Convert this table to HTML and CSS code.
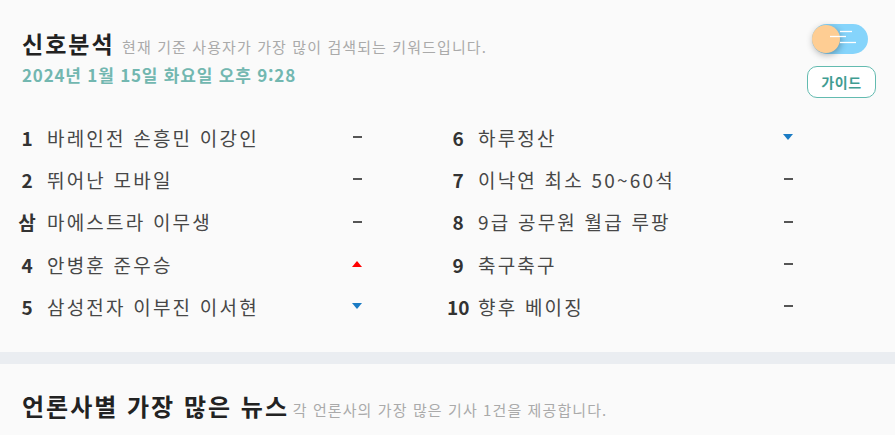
FILE: index.html
```html
<!DOCTYPE html>
<html lang="ko">
<head>
<meta charset="utf-8">
<link rel="stylesheet" href="styles.css">
</head>
<body>
<section class="card">
  <header class="head">
    <div class="head-text">
      <h1 class="title">신호분석 <span class="sub">현재 기준 사용자가 가장 많이 검색되는 키워드입니다.</span></h1>
      <p class="date">2024년 1월 15일 화요일 오후 9:28</p>
    </div>
    <div class="head-side">
      <div class="toggle">
        <span class="knob"></span>
        <svg class="speed" width="30" height="16" viewBox="0 0 30 16">
          <line x1="10" y1="1.5" x2="22" y2="1.5" stroke="#fff" stroke-width="1.3"/>
          <line x1="0" y1="6.5" x2="16" y2="6.5" stroke="#fff" stroke-width="1.3"/>
          <line x1="10" y1="12.5" x2="26" y2="12.5" stroke="#fff" stroke-width="1.3"/>
        </svg>
      </div>
      <button class="guide">가이드</button>
    </div>
  </header>
  <div class="ranks">
    <ol class="col">
      <li class="row"><span class="no">1</span><span class="kw">바레인전 손흥민 이강인</span><span class="st same"></span></li>
      <li class="row"><span class="no">2</span><span class="kw">뛰어난 모바일</span><span class="st same"></span></li>
      <li class="row"><span class="no">삼</span><span class="kw">마에스트라 이무생</span><span class="st same"></span></li>
      <li class="row"><span class="no">4</span><span class="kw">안병훈 준우승</span><span class="st up"></span></li>
      <li class="row"><span class="no">5</span><span class="kw">삼성전자 이부진 이서현</span><span class="st down"></span></li>
    </ol>
    <ol class="col">
      <li class="row"><span class="no">6</span><span class="kw">하루정산</span><span class="st down"></span></li>
      <li class="row"><span class="no">7</span><span class="kw">이낙연 최소 50~60석</span><span class="st same"></span></li>
      <li class="row"><span class="no">8</span><span class="kw">9급 공무원 월급 루팡</span><span class="st same"></span></li>
      <li class="row"><span class="no">9</span><span class="kw">축구축구</span><span class="st same"></span></li>
      <li class="row"><span class="no">10</span><span class="kw">향후 베이징</span><span class="st same"></span></li>
    </ol>
  </div>
</section>
<div class="divider"></div>
<section class="card card2">
  <h2 class="title title2">언론사별 가장 많은 뉴스 <span class="sub sub2">각 언론사의 가장 많은 기사 1건을 제공합니다.</span></h2>
</section>
</body>
</html>
```
FILE: styles.css
```css
* { box-sizing: border-box; }
html, body { margin: 0; padding: 0; }
body {
  background: #fafafa;
  font-family: "Noto Sans CJK KR", "Noto Sans", sans-serif;
  color: #333;
  width: 895px;
  height: 435px;
  overflow: hidden;
}
.card { padding: 0 22px; }
.head {
  display: flex;
  justify-content: space-between;
  padding-top: 27px;
}
.title {
  margin: 0;
  font-size: 23px;
  font-weight: 700;
  color: #222;
  line-height: 32px;
  letter-spacing: 2px;
}
.title2 {
  font-size: 24px;
  letter-spacing: 2px;
}
.sub {
  font-size: 15px;
  font-weight: 400;
  color: #aaa;
  letter-spacing: 1.1px;
  margin-left: -1px;
}
.sub2 { margin-left: -5px; }
.date {
  margin: 0;
  font-size: 17px;
  font-weight: 700;
  color: #72b7b0;
  line-height: 24px;
  letter-spacing: 0.8px;
}
.head-side {
  display: flex;
  flex-direction: column;
  align-items: flex-end;
  gap: 12px;
  margin-top: -3px;
}
.toggle {
  position: relative;
  width: 56px;
  height: 30px;
  margin-right: 5px;
  border-radius: 15px;
  background: #85d4fb;
}
.knob {
  position: absolute;
  left: 0;
  top: 1px;
  width: 28px;
  height: 28px;
  border-radius: 50%;
  background: #fecd93;
  box-shadow: 1px 2px 7px rgba(0,0,0,0.3);
}
.speed {
  position: absolute;
  left: 18px;
  top: 6px;
}
.guide {
  width: 69px;
  height: 32px;
  border: 1.5px solid #63bbb0;
  border-radius: 10px;
  background: #fff;
  color: #3f9d92;
  font-family: inherit;
  font-size: 14px;
  font-weight: 700;
  letter-spacing: 0.6px;
  padding: 0;
  margin-right: -3px;
}
.ranks {
  display: grid;
  grid-template-columns: 431px 431px;
  margin: 18px 0 0 -6px;
}
.col {
  list-style: none;
  margin: 0;
  padding: 0;
}
.row {
  display: grid;
  grid-template-columns: 22px 296px 10px;
  column-gap: 9px;
  align-items: center;
  height: 42.3px;
}
.no {
  text-align: center;
  font-size: 19px;
  font-weight: 700;
  color: #333;
  white-space: nowrap;
}
.kw {
  font-size: 19px;
  color: #474747;
  letter-spacing: 2.2px;
  white-space: nowrap;
}
.st { justify-self: center; }
.same {
  width: 9px;
  height: 2px;
  background: #555;
}
.up {
  width: 0; height: 0;
  border-left: 5px solid transparent;
  border-right: 5px solid transparent;
  border-bottom: 6px solid #f00;
}
.down {
  width: 0; height: 0;
  border-left: 5px solid transparent;
  border-right: 5px solid transparent;
  border-top: 6px solid #1a7bc4;
}
.divider {
  height: 12px;
  background: #eaedf1;
  margin-top: 25px;
}
.card2 { padding-top: 26px; }
```
